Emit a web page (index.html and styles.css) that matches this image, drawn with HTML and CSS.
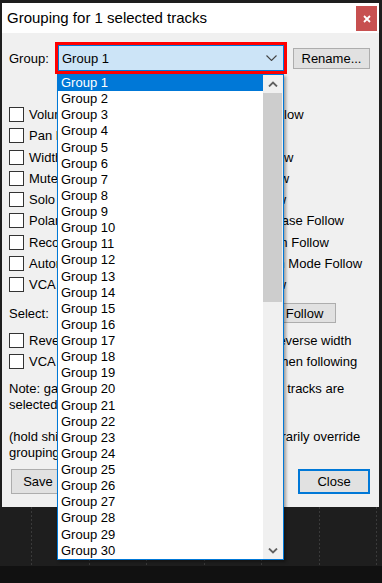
FILE: index.html
```html
<!DOCTYPE html>
<html lang="en">
<head>
    <meta charset="UTF-8">
    <meta name="viewport" content="width=device-width, initial-scale=1.0">
    <title>Grouping for 1 selected tracks</title>
    <link rel="stylesheet" href="styles.css">
</head>
<body>
    <div class="desktop">
        <div class="dialog">
            <!-- title bar -->
            <div class="title-bar">
                <span class="title">Grouping for 1 selected tracks</span>
                <button class="close-x" aria-label="Close">
                    <svg width="8" height="8" viewBox="0 0 8 8"><path d="M1 1 L7 7 M7 1 L1 7" stroke="#fff" stroke-width="1.8"/></svg>
                </button>
            </div>

            <div class="dialog-body">
                <!-- group picker -->
                <div class="group-row">
                    <span class="group-label">Group:</span>
                    <div class="combo-mark">
                        <div class="combo">
                            <span>Group 1</span>
                            <svg class="chevron" width="11" height="6" viewBox="0 0 11 6"><path d="M0.5 0.5 L5.5 5.5 L10.5 0.5" fill="none" stroke="#444" stroke-width="1.1"/></svg>
                        </div>

                        <!-- open dropdown list -->
                        <div class="dropdown">
                            <ul class="dropdown-items">
                                <li class="selected">Group 1</li>
                                <li>Group 2</li>
                                <li>Group 3</li>
                                <li>Group 4</li>
                                <li>Group 5</li>
                                <li>Group 6</li>
                                <li>Group 7</li>
                                <li>Group 8</li>
                                <li>Group 9</li>
                                <li>Group 10</li>
                                <li>Group 11</li>
                                <li>Group 12</li>
                                <li>Group 13</li>
                                <li>Group 14</li>
                                <li>Group 15</li>
                                <li>Group 16</li>
                                <li>Group 17</li>
                                <li>Group 18</li>
                                <li>Group 19</li>
                                <li>Group 20</li>
                                <li>Group 21</li>
                                <li>Group 22</li>
                                <li>Group 23</li>
                                <li>Group 24</li>
                                <li>Group 25</li>
                                <li>Group 26</li>
                                <li>Group 27</li>
                                <li>Group 28</li>
                                <li>Group 29</li>
                                <li>Group 30</li>
                            </ul>
                            <div class="scrollbar">
                                <div class="scroll-btn">
                                    <svg width="10" height="6" viewBox="0 0 10 6"><path d="M1 5.5 L5 1.5 L9 5.5" fill="none" stroke="#606060" stroke-width="1.8"/></svg>
                                </div>
                                <div class="scroll-thumb"></div>
                                <div class="scroll-btn scroll-down">
                                    <svg width="10" height="6" viewBox="0 0 10 6"><path d="M1 0.5 L5 4.5 L9 0.5" fill="none" stroke="#606060" stroke-width="1.8"/></svg>
                                </div>
                            </div>
                        </div>
                    </div>
                    <button class="btn rename-btn">Rename...</button>
                </div>

                <!-- lead / follow flags -->
                <div class="flag-grid">
                    <label class="check"><span class="box"></span>Volume Lead</label>
                    <label class="check"><span class="box"></span>Volume Follow</label>
                    <label class="check"><span class="box"></span>Pan Lead</label>
                    <label class="check"><span class="box"></span>Pan Follow</label>
                    <label class="check"><span class="box"></span>Width Lead</label>
                    <label class="check"><span class="box"></span>Width Follow</label>
                    <label class="check"><span class="box"></span>Mute Lead</label>
                    <label class="check"><span class="box"></span>Mute Follow</label>
                    <label class="check"><span class="box"></span>Solo Lead</label>
                    <label class="check"><span class="box"></span>Solo Follow</label>
                    <label class="check"><span class="box"></span>Polarity/Phase Lead</label>
                    <label class="check"><span class="box"></span>Polarity/Phase Follow</label>
                    <label class="check"><span class="box"></span>Record Arm Lead</label>
                    <label class="check"><span class="box"></span>Record Arm Follow</label>
                    <label class="check"><span class="box"></span>Automation Mode Lead</label>
                    <label class="check"><span class="box"></span>Automation Mode Follow</label>
                    <label class="check"><span class="box"></span>VCA Lead</label>
                    <label class="check"><span class="box"></span>VCA Follow</label>
                </div>

                <div class="select-row">
                    <span class="select-label">Select:</span>
                    <button class="btn small-btn">Lead</button>
                    <button class="btn small-btn">Follow</button>
                </div>

                <div class="option-grid">
                    <label class="check"><span class="box"></span>Reverse volume</label>
                    <label class="check"><span class="box"></span>Reverse width</label>
                    <label class="check"><span class="box"></span>VCA pre-FX</label>
                    <label class="check"><span class="box"></span>When following</label>
                </div>

                <div class="note">
                    <div>Note: gang settings apply to all tracks if multiple tracks are</div>
                    <div>selected.</div>
                    <div>&nbsp;</div>
                    <div>(hold shift when adjusting track faders to temporarily override</div>
                    <div>grouping)</div>
                </div>

                <div class="button-row">
                    <button class="btn save-btn">Save</button>
                    <button class="btn close-btn">Close</button>
                </div>
            </div>
        </div>

        <div class="tracks"></div>
        <div class="bottom-band"></div>
    </div>
</body>
</html>
```

FILE: styles.css
```css
* {
    margin: 0;
    padding: 0;
    box-sizing: border-box;
}

body {
    font-family: "Liberation Sans", Arial, sans-serif;
    font-size: 13px;
    color: #000;
    background: #1e1e1e;
    width: 382px;
    height: 583px;
    overflow: hidden;
}

button {
    font: inherit;
    color: inherit;
}

.desktop {
    padding-top: 3px;
}

/* dialog window */
.dialog {
    width: 377px;
    height: 504px;
    margin-left: 2px;
    display: flex;
    flex-direction: column;
    background: #f0f0f0;
}

.title-bar {
    height: 30px;
    flex: 0 0 30px;
    background: #fff;
    display: flex;
    justify-content: space-between;
    padding-left: 5px;
}

.title {
    font-size: 15px;
    line-height: 30px;
}

.close-x {
    width: 21px;
    height: 25px;
    margin: 3px 2px 0 0;
    border: none;
    background: #c75050;
    display: flex;
    align-items: center;
    justify-content: center;
}

.dialog-body {
    flex: 1;
    padding: 9px 9px 0 7px;
}

.btn {
    background: #e1e1e1;
    border: 1px solid #adadad;
    white-space: nowrap;
}

/* group row */
.group-row {
    display: flex;
    align-items: center;
    height: 32px;
}

.group-label {
    width: 46px;
}

.combo-mark {
    position: relative;
    width: 232px;
    height: 32px;
    border: 3px solid #f00;
}

.combo {
    height: 100%;
    border: 1px solid #0078d7;
    background: #cce4f7;
    display: flex;
    align-items: center;
    justify-content: space-between;
    padding: 0 6px 0 3px;
}

.rename-btn {
    margin-left: auto;
    width: 77px;
    height: 21px;
}

/* the open list lies over the dialog */
.dropdown {
    position: absolute;
    top: 29px;
    left: -1px;
    width: 227px;
    height: 486px;
    border: 1px solid #0078d7;
    background: #fff;
    display: flex;
    box-shadow: 2px 2px 3px rgba(0, 0, 0, 0.35);
    z-index: 10;
}

.dropdown-items {
    list-style: none;
    flex: 1;
}

.dropdown-items li {
    height: 16.13px;
    line-height: 16.13px;
    padding-left: 3px;
    white-space: nowrap;
}

.dropdown-items li.selected {
    background: #0078d7;
    color: #fff;
}

.scrollbar {
    width: 20px;
    background: #f0f0f0;
    display: flex;
    flex-direction: column;
}

.scroll-btn {
    height: 17px;
    display: flex;
    align-items: center;
    justify-content: center;
}

.scroll-thumb {
    height: 209px;
    margin: 1px 1px 0 0;
    background: #cdcdcd;
}

.scroll-down {
    margin-top: auto;
}

/* checkbox grids */
.flag-grid {
    margin-top: 30px;
    display: grid;
    grid-template-columns: 190px auto;
    grid-auto-rows: 21.25px;
}

.check {
    display: flex;
    align-items: center;
    gap: 5px;
    white-space: nowrap;
}

.box {
    width: 15px;
    height: 15px;
    border: 1px solid #333;
    background: #fff;
    flex: 0 0 15px;
}

.select-row {
    margin-top: 8px;
    height: 20px;
    display: flex;
    align-items: center;
    gap: 11px;
}

.select-label {
    width: 179px;
}

.small-btn {
    width: 63px;
    height: 20px;
}

.option-grid {
    margin-top: 7px;
    display: grid;
    grid-template-columns: 240px auto;
    grid-auto-rows: 21px;
}

.note {
    margin-top: 9px;
    line-height: 16px;
    white-space: nowrap;
}

.button-row {
    margin-top: 8px;
    display: flex;
    justify-content: space-between;
    padding-left: 2px;
}

.save-btn {
    width: 54px;
    height: 25px;
}

.close-btn {
    width: 72px;
    height: 25px;
    border: 2px solid #0078d7;
}

/* arrange view behind the dialog */
.tracks {
    height: 59px;
    background:
        repeating-linear-gradient(180deg, transparent 0 2px, #1e1e1e 2px 4px),
        repeating-linear-gradient(90deg, #3a3a3a 0 1px, transparent 1px 57.5px);
    background-position: 0 0, 31px 0;
}

.bottom-band {
    height: 17px;
    background: #111;
}
```
